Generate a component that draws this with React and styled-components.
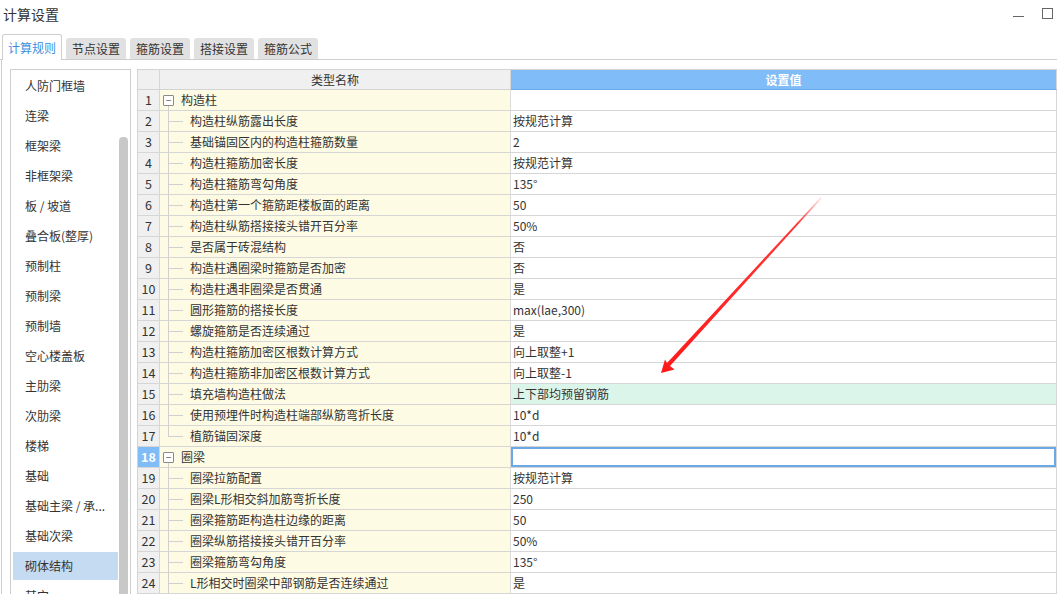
import styled, { createGlobalStyle } from 'styled-components';

const GlobalStyle = createGlobalStyle`
  html, body {
    margin: 0;
    padding: 0;
    background: #fff;
    overflow: hidden;
  }
  body {
    font-family: "Noto Sans CJK SC", "Noto Sans", sans-serif;
    color: #333;
  }
`;

const categories = [
  '人防门框墙',
  '连梁',
  '框架梁',
  '非框架梁',
  '板 / 坡道',
  '叠合板(整厚)',
  '预制柱',
  '预制梁',
  '预制墙',
  '空心楼盖板',
  '主肋梁',
  '次肋梁',
  '楼梯',
  '基础',
  '基础主梁 / 承...',
  '基础次梁',
  '砌体结构',
  '其它',
];

const tabs = ['计算规则', '节点设置', '箍筋设置', '搭接设置', '箍筋公式'];

const rows = [
  { id: 1, name: '构造柱', group: true },
  { id: 2, name: '构造柱纵筋露出长度', value: '按规范计算' },
  { id: 3, name: '基础锚固区内的构造柱箍筋数量', value: '2' },
  { id: 4, name: '构造柱箍筋加密长度', value: '按规范计算' },
  { id: 5, name: '构造柱箍筋弯勾角度', value: '135°' },
  { id: 6, name: '构造柱第一个箍筋距楼板面的距离', value: '50' },
  { id: 7, name: '构造柱纵筋搭接接头错开百分率', value: '50%' },
  { id: 8, name: '是否属于砖混结构', value: '否' },
  { id: 9, name: '构造柱遇圈梁时箍筋是否加密', value: '否' },
  { id: 10, name: '构造柱遇非圈梁是否贯通', value: '是' },
  { id: 11, name: '圆形箍筋的搭接长度', value: 'max(lae,300)' },
  { id: 12, name: '螺旋箍筋是否连续通过', value: '是' },
  { id: 13, name: '构造柱箍筋加密区根数计算方式', value: '向上取整+1' },
  { id: 14, name: '构造柱箍筋非加密区根数计算方式', value: '向上取整-1' },
  { id: 15, name: '填充墙构造柱做法', value: '上下部均预留钢筋', changed: true },
  { id: 16, name: '使用预埋件时构造柱端部纵筋弯折长度', value: '10*d' },
  { id: 17, name: '植筋锚固深度', value: '10*d', last: true },
  { id: 18, name: '圈梁', group: true, active: true },
  { id: 19, name: '圈梁拉筋配置', value: '按规范计算' },
  { id: 20, name: '圈梁L形相交斜加筋弯折长度', value: '250' },
  { id: 21, name: '圈梁箍筋距构造柱边缘的距离', value: '50' },
  { id: 22, name: '圈梁纵筋搭接接头错开百分率', value: '50%' },
  { id: 23, name: '圈梁箍筋弯勾角度', value: '135°' },
  { id: 24, name: 'L形相交时圈梁中部钢筋是否连续通过', value: '是' },
];

const App = () => {
  return (
    <Window>
      <GlobalStyle />
      <TitleBar>
        <Title>计算设置</Title>
        <Controls>
          <MinButton />
          <MaxButton />
        </Controls>
      </TitleBar>
      <TabBar>
        {tabs.map((t, i) => (
          <Tab key={t} $active={i === 0}>
            {t}
          </Tab>
        ))}
      </TabBar>
      <Content>
        <SidePanel>
          <SideList>
            {categories.map((c) => (
              <SideItem key={c} $selected={c === '砌体结构'}>
                {c}
              </SideItem>
            ))}
          </SideList>
          <ScrollTrack>
            <ScrollThumb />
          </ScrollTrack>
        </SidePanel>
        <Grid>
          <HeadCell />
          <HeadCell>类型名称</HeadCell>
          <HeadCell $value>设置值</HeadCell>
          {rows.map((r) => (
            <Row key={r.id} row={r} />
          ))}
        </Grid>
      </Content>
      <Arrow viewBox="0 0 1057 594" width="1057" height="594">
        <defs>
          <linearGradient id="fade" x1="821" y1="197" x2="661" y2="373" gradientUnits="userSpaceOnUse">
            <stop offset="0" stopColor="#ff2020" stopOpacity="0.1" />
            <stop offset="0.15" stopColor="#ff2020" stopOpacity="0.9" />
            <stop offset="1" stopColor="#ff1a1a" />
          </linearGradient>
        </defs>
        <polygon
          points="821,197 822,198 670,366 674.5,369.5 661,373 665,359.5 667,363"
          fill="url(#fade)"
        />
      </Arrow>
    </Window>
  );
};

const Row = ({ row }) => (
  <>
    <NumCell $active={row.active}>{row.id}</NumCell>
    <NameCell>
      {row.group ? (
        <ToggleWrap>
          <Spacer />
          <ToggleBox>−</ToggleBox>
          <Tail />
        </ToggleWrap>
      ) : (
        <Connector>
          <Branch />
          <Trunk $last={row.last} />
        </Connector>
      )}
      <NameText $group={row.group}>{row.name}</NameText>
    </NameCell>
    <ValueCell $changed={row.changed} $editing={row.active}>
      {row.value}
    </ValueCell>
  </>
);

const Window = styled.div`
  position: relative;
  width: 1057px;
  height: 594px;
  overflow: hidden;
  display: flex;
  flex-direction: column;
`;

const TitleBar = styled.div`
  height: 28px;
  display: flex;
  align-items: center;
  justify-content: space-between;
  padding-left: 3px;
`;

const Title = styled.div`
  font-size: 14px;
  color: #333;
`;

const Controls = styled.div`
  display: flex;
  align-items: center;
  gap: 18px;
  padding-right: 4px;
  margin-top: -2px;
`;

const MinButton = styled.span`
  display: block;
  width: 11px;
  height: 1px;
  background: #666;
  margin-top: 6px;
`;

const MaxButton = styled.span`
  display: block;
  width: 9px;
  height: 9px;
  border: 1px solid #666;
`;

const TabBar = styled.div`
  height: 31px;
  display: flex;
  align-items: flex-end;
  gap: 4px;
  padding-left: 2px;
  border-bottom: 1px solid #cfcfcf;
`;

const Tab = styled.div`
  box-sizing: border-box;
  width: 60px;
  text-align: center;
  font-size: 12px;
  height: ${(p) => (p.$active ? '26px' : '21px')};
  line-height: ${(p) => (p.$active ? '25px' : '21px')};
  color: ${(p) => (p.$active ? '#3d8fe0' : '#333')};
  background: ${(p) => (p.$active ? '#fff' : '#e1e1e1')};
  border: ${(p) => (p.$active ? '1px solid #cfcfcf' : 'none')};
  border-bottom: none;
  border-radius: 3px 3px 0 0;
  margin-bottom: ${(p) => (p.$active ? '-1px' : '0')};
`;

const Content = styled.div`
  flex: 1;
  min-height: 0;
  display: flex;
  align-items: flex-start;
  gap: 6px;
  margin-left: 1px;
  border-left: 1px solid #cfcfcf;
  padding: 9px 0 0 8px;
`;

const SidePanel = styled.div`
  box-sizing: border-box;
  width: 121px;
  height: 560px;
  flex-shrink: 0;
  display: flex;
  border: 1px solid #cfcfcf;
`;

const SideList = styled.div`
  flex: 1;
  padding: 2px 1px 0 2px;
`;

const SideItem = styled.div`
  height: 28px;
  line-height: 28px;
  margin-bottom: 2px;
  padding-left: 12px;
  font-size: 12px;
  color: #333;
  white-space: nowrap;
  background: ${(p) => (p.$selected ? '#c4dbf2' : 'transparent')};
`;

const ScrollTrack = styled.div`
  width: 9px;
  margin-right: 2px;
  padding-top: 67px;
`;

const ScrollThumb = styled.div`
  height: 500px;
  background: #c8c8c8;
  border-radius: 4px 4px 0 0;
`;

const Grid = styled.div`
  flex: 1;
  display: grid;
  grid-template-columns: 22px 351px 1fr;
  grid-auto-rows: 21px;
  grid-template-rows: 20px;
  border-top: 1px solid #d3d3d3;
  border-left: 1px solid #d3d3d3;
  font-size: 12px;
`;

const Cell = styled.div`
  box-sizing: border-box;
  border-right: 1px solid #d6d6d6;
  border-bottom: 1px solid #d6d6d6;
  line-height: 20px;
  white-space: nowrap;
  overflow: hidden;
`;

const HeadCell = styled(Cell)`
  line-height: 19px;
  text-align: center;
  color: ${(p) => (p.$value ? '#fff' : '#333')};
  font-weight: ${(p) => (p.$value ? 600 : 400)};
  background: ${(p) => (p.$value ? '#80bcf8' : '#f0f0f0')};
  border-bottom-color: ${(p) => (p.$value ? '#69a8ea' : '#d3d3d3')};
`;

const NumCell = styled(Cell)`
  text-align: center;
  background: ${(p) => (p.$active ? '#80bcf8' : '#f0f0f0')};
  color: ${(p) => (p.$active ? '#fff' : '#333')};
  font-weight: ${(p) => (p.$active ? 700 : 400)};
  font-size: 12.5px;
`;

const NameCell = styled(Cell)`
  display: flex;
  align-items: stretch;
  background: #fefbe5;
  border-right-color: #dcdcdc;
`;

const ToggleWrap = styled.div`
  width: 11px;
  margin-left: 3px;
  display: flex;
  flex-direction: column;
  align-items: center;
`;

const Spacer = styled.div`
  flex: 1;
`;

const Tail = styled.div`
  flex: 1;
  width: 0;
  border-left: 1px solid #d0d0d0;
`;

const ToggleBox = styled.div`
  box-sizing: border-box;
  width: 11px;
  height: 11px;
  border: 1px solid #8a8a8a;
  border-radius: 1px;
  background: #fff;
  font-size: 10px;
  line-height: 8px;
  text-align: center;
  color: #555;
`;

const Connector = styled.div`
  width: 15px;
  margin-left: 8px;
  display: flex;
  flex-direction: column;
`;

const Branch = styled.div`
  flex: 1;
  border-left: 1px solid #d0d0d0;
  border-bottom: 1px solid #d0d0d0;
`;

const Trunk = styled.div`
  flex: 1;
  border-left: 1px solid ${(p) => (p.$last ? 'transparent' : '#d0d0d0')};
`;

const NameText = styled.span`
  margin-left: ${(p) => (p.$group ? '7px' : '7px')};
  color: #333;
`;

const ValueCell = styled(Cell)`
  padding-left: 2px;
  color: #333;
  background: ${(p) => (p.$changed ? '#dcf5eb' : '#fff')};
  box-shadow: ${(p) => (p.$editing ? 'inset 0 0 0 2px #6da8e6' : 'none')};
`;

const Arrow = styled.svg`
  position: absolute;
  top: 0;
  left: 0;
  pointer-events: none;
`;

export default App;
